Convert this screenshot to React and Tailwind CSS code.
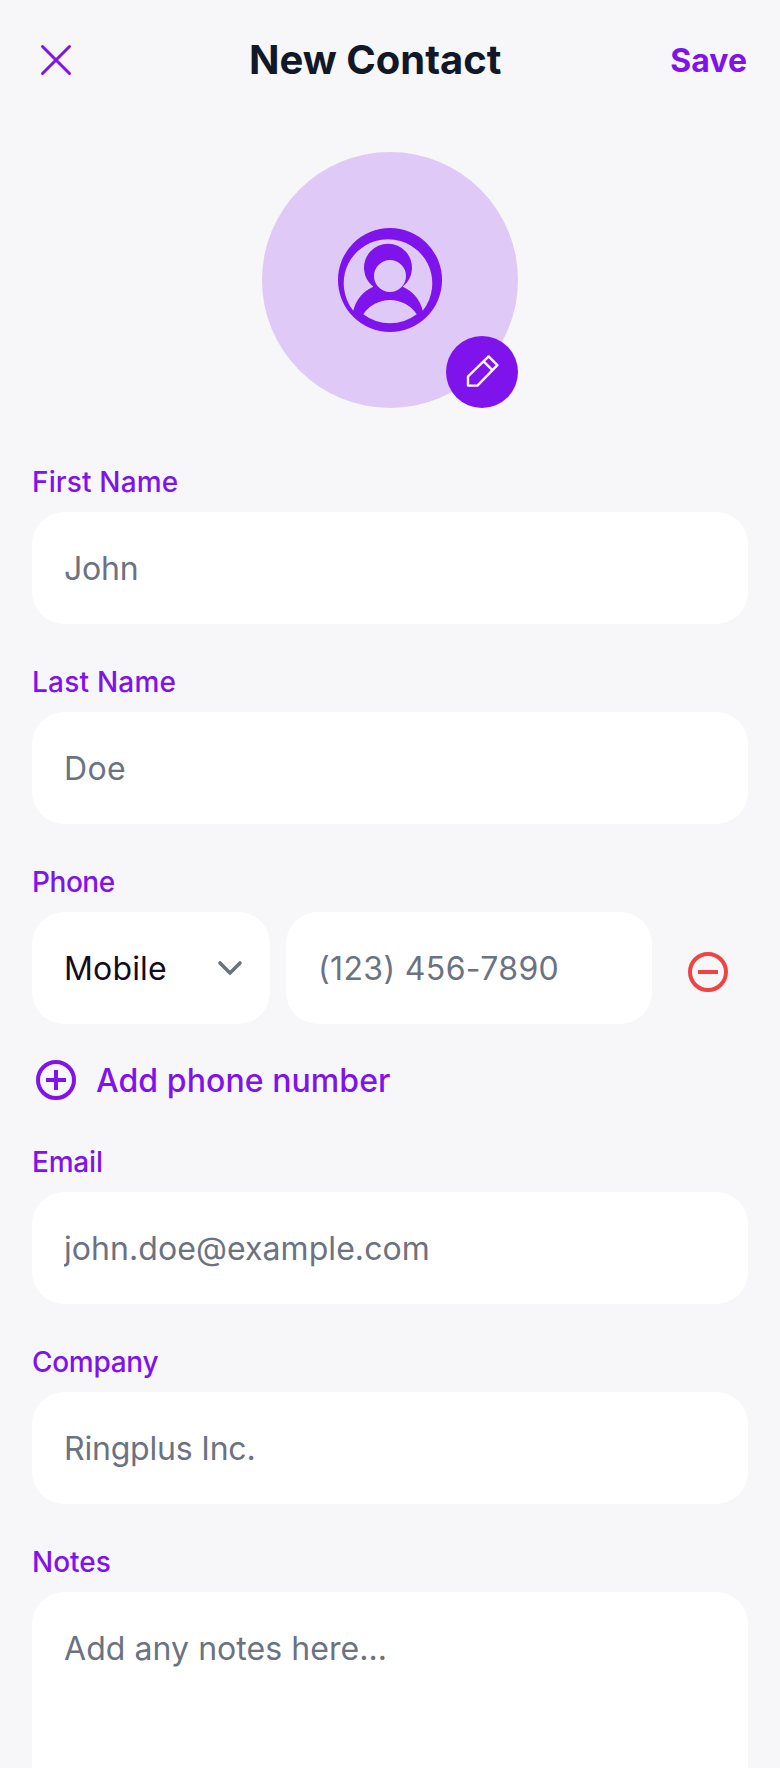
const inputBase =
  "block h-28 w-full rounded-4xl bg-white px-8 text-[32px] leading-[48px] text-[#140d1c] outline-none placeholder:text-[#6b7280] placeholder:opacity-100";

function Label({ htmlFor, tracking = "", children }) {
  return (
    <label htmlFor={htmlFor} className={`mb-3 block text-[28px] leading-9 font-medium text-[#7f13ec] ${tracking}`}>
      {children}
    </label>
  );
}

function Field({ id, label, placeholder, labelTracking, inputTracking = "" }) {
  return (
    <div>
      <Label htmlFor={id} tracking={labelTracking}>{label}</Label>
      <input id={id} placeholder={placeholder} className={`${inputBase} ${inputTracking}`} />
    </div>
  );
}

function CloseIcon() {
  return (
    <svg className="size-12" viewBox="0 0 48 48" fill="none" stroke="currentColor" strokeWidth="3" strokeLinecap="round">
      <path d="M10.5 10.5 37.5 37.5M37.5 10.5 10.5 37.5" />
    </svg>
  );
}

function PersonIcon() {
  return (
    <svg className="size-[104px]" viewBox="0 0 104 104" fill="currentColor">
      <path
        fillRule="evenodd"
        d="M52 0a52 52 0 1 1 0 104a52 52 0 1 1 0-104ZM50 11.3A44 44 0 0 0 15.3 82.7A35.7 35.7 0 0 1 35.3 58.7A24 24 0 1 1 64.7 58.7A35.7 35.7 0 0 1 84.7 82.7A44 44 0 0 0 50 11.3ZM52 32a16 16 0 1 0 0 32a16 16 0 1 0 0-32ZM25.3 86.3A32.1 32.1 0 0 1 78.7 86.3A44 44 0 0 1 25.3 86.3Z"
      />
    </svg>
  );
}

function PencilIcon() {
  return (
    <svg className="size-10" viewBox="0 0 40 40" fill="none" stroke="currentColor" strokeWidth="2.4" strokeLinejoin="round" strokeLinecap="round">
      <path d="M6 24.5 26.6 4.4 35.4 13.2 15.4 33.6H6ZM21.6 9.4 30.4 18.2" />
    </svg>
  );
}

function CircleIcon({ plus }) {
  return (
    <svg className="size-12" viewBox="0 0 48 48" fill="none" stroke="currentColor" strokeWidth="4">
      <circle cx="24" cy="24" r="18" />
      <path d={plus ? "M14 24h20M24 14v20" : "M14 24h20"} />
    </svg>
  );
}

export default function App() {
  return (
    <div className="h-[1768px] overflow-hidden bg-[#f7f6f8] font-['Inter',sans-serif]">
      <header className="flex h-[120px] items-center pr-[33px] pl-8">
        <button className="flex text-[#7f13ec]" aria-label="Close">
          <CloseIcon />
        </button>
        <h1 className="flex-1 text-center text-[40px] leading-[50px] font-bold text-[#111827]">New Contact</h1>
        <button className="pt-0.5 text-[32px] leading-[48px] font-bold text-[#7f13ec]">Save</button>
      </header>

      <div className="flex justify-center pt-8">
        <div className="relative flex size-64 items-center justify-center rounded-full bg-[#dfc9f6] text-[#7f13ec]">
          <PersonIcon />
          <button
            className="absolute right-0 bottom-0 flex size-[72px] items-center justify-center rounded-full bg-[#7f13ec] text-white"
            aria-label="Edit photo"
          >
            <PencilIcon />
          </button>
        </div>
      </div>

      <form className="flex flex-col gap-10 px-8 pt-14">
        <Field id="first" label="First Name" placeholder="John" labelTracking="tracking-[0.15px]" inputTracking="tracking-[-0.2px]" />
        <Field id="last" label="Last Name" placeholder="Doe" labelTracking="tracking-[0.22px]" inputTracking="tracking-[0.4px]" />
        <div>
          <Label htmlFor="phone" tracking="tracking-[-0.45px]">Phone</Label>
          <div className="flex items-center gap-4">
            <button
              type="button"
              className="flex h-28 w-[238px] items-center justify-between rounded-4xl bg-white pr-5 pl-8 text-[32px] leading-[48px] tracking-[0.15px] text-[#140d1c]"
            >
              <span className="pt-0.5">Mobile</span>
              <svg className="size-10 text-[#6b7280]" viewBox="0 0 40 40" fill="none" stroke="currentColor" strokeWidth="3.6" strokeLinecap="round" strokeLinejoin="round">
                <path d="m10 15 10 10 10-10" />
              </svg>
            </button>
            <div className="w-[366px]">
              <input id="phone" placeholder="(123) 456-7890" className={`${inputBase} tracking-[0.36px]`} />
            </div>
            <button type="button" className="flex flex-1 justify-center pt-2 text-[#ef4444]" aria-label="Remove phone number">
              <CircleIcon />
            </button>
          </div>
          <button
            type="button"
            className="mt-8 flex h-12 items-center gap-4 text-[32px] leading-[48px] font-medium tracking-[0.07px] text-[#7f13ec]"
          >
            <CircleIcon plus />
            <span className="pt-0.5">Add phone number</span>
          </button>
        </div>
        <Field id="email" label="Email" placeholder="john.doe@example.com" labelTracking="tracking-[-0.2px]" inputTracking="tracking-[0.07px]" />
        <Field id="company" label="Company" placeholder="Ringplus Inc." labelTracking="tracking-[-0.3px]" inputTracking="tracking-[-0.2px]" />
        <div>
          <Label htmlFor="notes">Notes</Label>
          <textarea
            id="notes"
            placeholder="Add any notes here..."
            className="block h-60 w-full resize-none rounded-4xl bg-white px-8 pt-[33px] text-[32px] leading-[48px] tracking-[0.06px] text-[#140d1c] outline-none placeholder:text-[#6b7280] placeholder:opacity-100"
          />
        </div>
      </form>
    </div>
  );
}
